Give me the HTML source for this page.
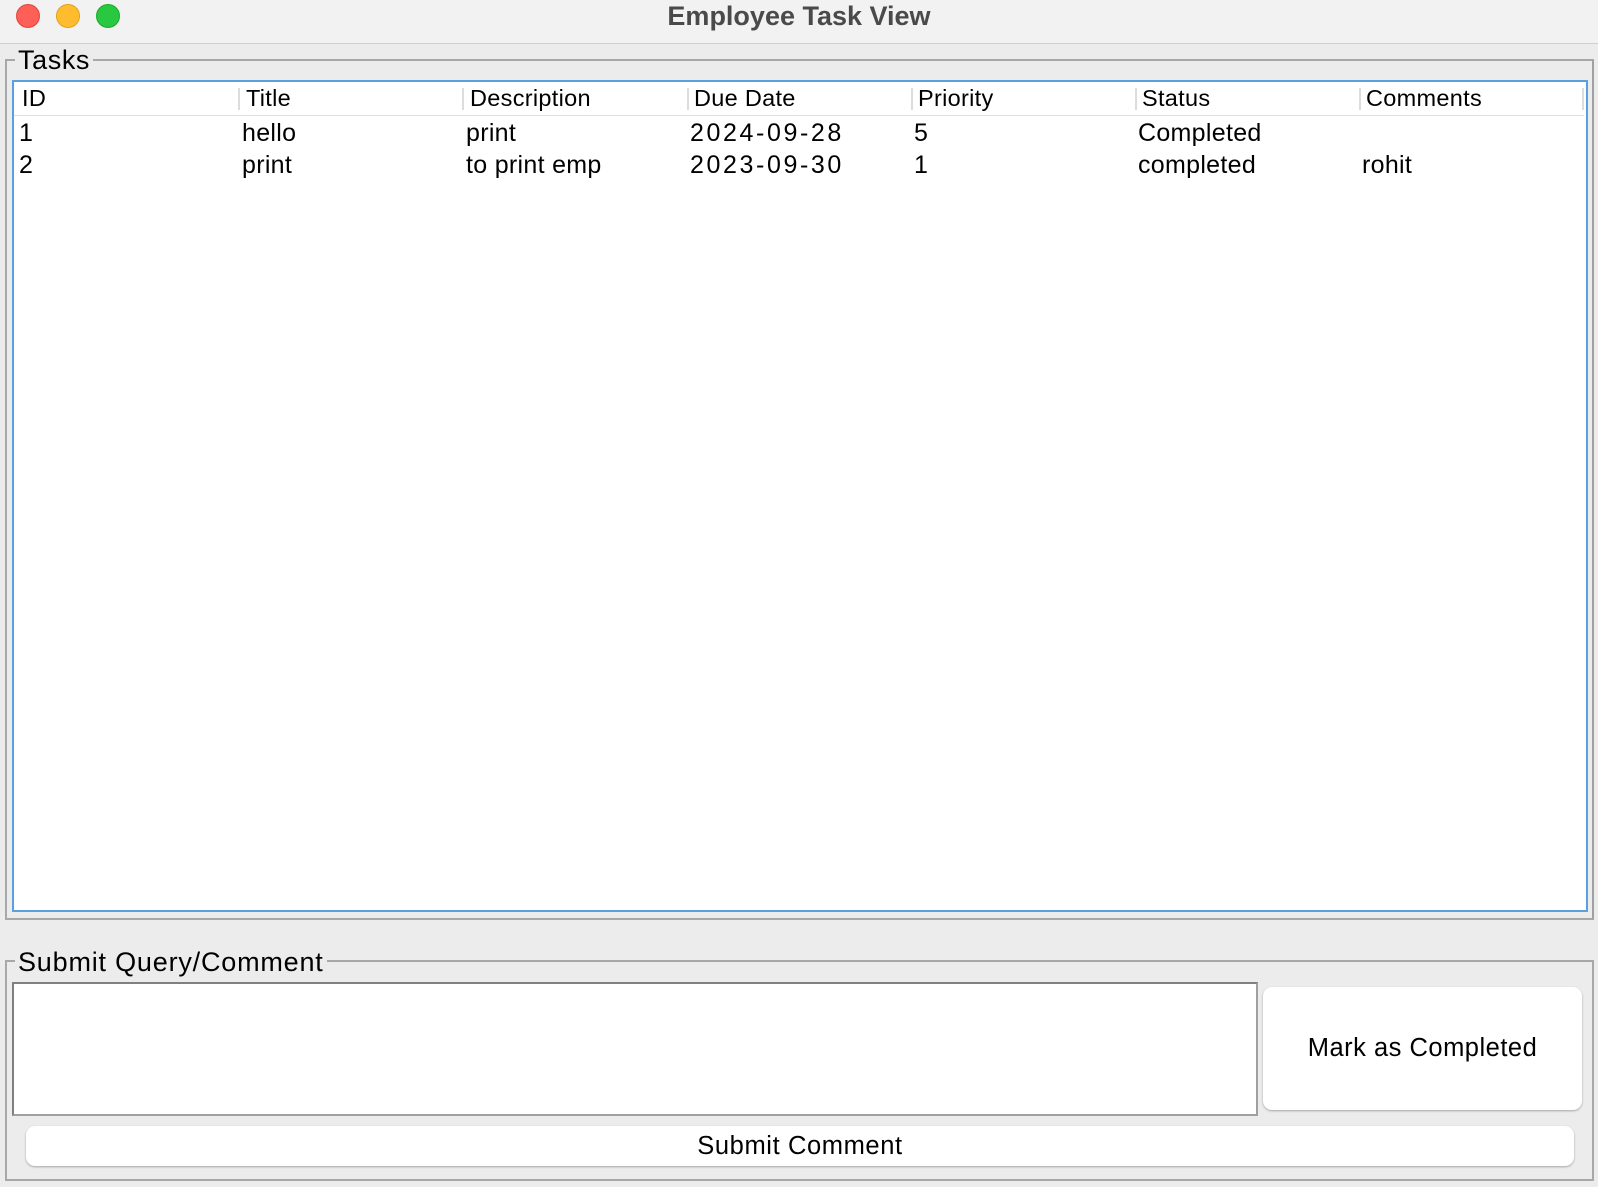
<!DOCTYPE html>
<html><head><meta charset="utf-8"><style>
*{margin:0;padding:0;box-sizing:border-box}
body{width:1598px;height:1187px;background:#ececec;position:relative;overflow:hidden;font-family:"Liberation Sans",sans-serif;color:#000}
.a{position:absolute}
.dot{position:absolute;top:4px;width:24px;height:24px;border-radius:50%}
.hd{position:absolute;top:86px;font-size:23.5px;line-height:24px;letter-spacing:0.3px}
.sep{position:absolute;top:88px;width:2px;height:22px;background:#dcdcdc}
.c{position:absolute;font-size:25px;line-height:26px;white-space:nowrap;letter-spacing:0.3px}
</style></head><body>
<div class="a" style="left:0;top:0;width:1598px;height:44px;background:#f2f2f2;border-bottom:1px solid #d0d0d0"></div>
<div class="dot" style="left:16px;background:#fe5f57;border:1px solid #e2463f"></div>
<div class="dot" style="left:56px;background:#febc2e;border:1px solid #e1a116"></div>
<div class="dot" style="left:96px;background:#28c840;border:1px solid #1aab29"></div>
<div class="a" style="left:0;top:0;width:1598px;text-align:center;font-weight:bold;font-size:27px;line-height:32px;color:#4a4a4a">Employee Task View</div>

<div class="a" style="left:5px;top:59px;width:1589px;height:861px;border:2px solid #a8a8a8;border-right-color:#a0a0a0"></div>
<div class="a" style="left:15px;top:44px;padding:0 3px;background:#ececec;font-size:27px;line-height:32px;letter-spacing:0.6px">Tasks</div>
<div class="a" style="left:12px;top:80px;width:1576px;height:832px;background:#fff;border:2px solid #5aa0e0"></div>
<div class="a" style="left:14px;top:115px;width:1570px;height:1px;background:#e0e0e0"></div>
<div class="sep" style="left:238px"></div><div class="sep" style="left:462px"></div><div class="sep" style="left:687px"></div><div class="sep" style="left:911px"></div><div class="sep" style="left:1135px"></div><div class="sep" style="left:1359px"></div><div class="sep" style="left:1582px"></div>
<div class="hd" style="left:22px">ID</div><div class="hd" style="left:246px">Title</div><div class="hd" style="left:470px">Description</div><div class="hd" style="left:694px">Due Date</div><div class="hd" style="left:918px">Priority</div><div class="hd" style="left:1142px">Status</div><div class="hd" style="left:1366px">Comments</div>
<div class="c" style="left:19px;top:120px">1</div><div class="c" style="left:242px;top:120px">hello</div><div class="c" style="left:466px;top:120px">print</div><div class="c" style="left:690px;top:120px;letter-spacing:2.6px">2024-09-28</div><div class="c" style="left:914px;top:120px">5</div><div class="c" style="left:1138px;top:120px">Completed</div>
<div class="c" style="left:19px;top:152px">2</div><div class="c" style="left:242px;top:152px">print</div><div class="c" style="left:466px;top:152px">to print emp</div><div class="c" style="left:690px;top:152px;letter-spacing:2.6px">2023-09-30</div><div class="c" style="left:914px;top:152px">1</div><div class="c" style="left:1138px;top:152px">completed</div><div class="c" style="left:1362px;top:152px">rohit</div>

<div class="a" style="left:5px;top:960px;width:1589px;height:221px;border:2px solid #a8a8a8"></div>
<div class="a" style="left:15px;top:946px;padding:0 3px;background:#ececec;font-size:27px;line-height:32px;letter-spacing:0.8px">Submit Query/Comment</div>
<div class="a" style="left:12px;top:982px;width:1246px;height:134px;background:#fff;border:2px solid #808080;border-right-color:#a0a0a0;border-bottom-color:#a0a0a0"></div>
<div class="a" style="left:1263px;top:987px;width:319px;height:123px;background:#fff;border-radius:9px;box-shadow:0 1px 2px rgba(0,0,0,.3);font-size:25.5px;line-height:123px;text-align:center;letter-spacing:0.5px">Mark as Completed</div>
<div class="a" style="left:26px;top:1126px;width:1548px;height:40px;background:#fff;border-radius:9px;box-shadow:0 1px 2px rgba(0,0,0,.3);font-size:25.5px;line-height:40px;text-align:center;letter-spacing:0.6px">Submit Comment</div>
</body></html>
